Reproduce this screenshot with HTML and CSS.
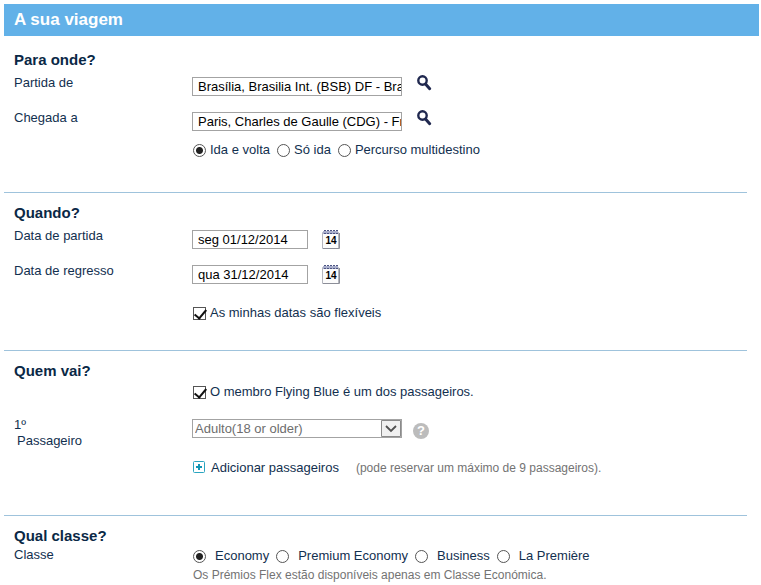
FILE: index.html
```html
<!DOCTYPE html>
<html lang="pt">
<head>
<meta charset="utf-8">
<title>A sua viagem</title>
<link rel="stylesheet" href="styles.css">
</head>
<body>
<form class="trip">
  <h1>A sua viagem</h1>

  <section class="first">
    <h2>Para onde?</h2>
    <div class="row">
      <label class="name" for="from">Partida de</label>
      <div class="field">
        <input class="box place" id="from" type="text" value="Brasília, Brasilia Int. (BSB) DF - Brasil">
        <button class="icon search" type="button" aria-label="Procurar partida"><svg width="15" height="16" viewBox="0 0 15 16"><circle cx="5.500" cy="5.500" r="4.200" fill="none" stroke="#20284f" stroke-width="2.400"/><path d="M8.500 9l4.200 4.700" stroke="#20284f" stroke-width="3" stroke-linecap="round"/></svg></button>
      </div>
    </div>
    <div class="row">
      <label class="name" for="to">Chegada a</label>
      <div class="field">
        <input class="box place" id="to" type="text" value="Paris, Charles de Gaulle (CDG) - França">
        <button class="icon search" type="button" aria-label="Procurar chegada"><svg width="15" height="16" viewBox="0 0 15 16"><circle cx="5.500" cy="5.500" r="4.200" fill="none" stroke="#20284f" stroke-width="2.400"/><path d="M8.500 9l4.200 4.700" stroke="#20284f" stroke-width="3" stroke-linecap="round"/></svg></button>
      </div>
    </div>
    <div class="row choices">
      <div class="options">
        <label><input type="radio" name="type" checked>Ida e volta</label>
        <label><input type="radio" name="type">Só ida</label>
        <label><input type="radio" name="type">Percurso multidestino</label>
      </div>
    </div>
  </section>

  <section>
    <h2>Quando?</h2>
    <div class="row">
      <label class="name" for="out">Data de partida</label>
      <div class="field">
        <input class="box date" id="out" type="text" value="seg 01/12/2014">
        <button class="icon" type="button" aria-label="Escolher data de partida"><svg width="18" height="19" viewBox="0 0 18 19"><path d="M.5 2.500h16v16h-16z" fill="#fcfcfc" stroke="#b4b6be"/><path d="M1 18.500h16.500V3" stroke="#8c8e98" fill="none"/><path d="M1 1h15v3h-15z" fill="#a9aecb"/><path d="M2 .5h14M2 3.500h14" stroke="#4d5584" stroke-dasharray="2 1"/><text x="9" y="14" text-anchor="middle" class="day">14</text></svg></button>
      </div>
    </div>
    <div class="row">
      <label class="name" for="back">Data de regresso</label>
      <div class="field">
        <input class="box date" id="back" type="text" value="qua 31/12/2014">
        <button class="icon" type="button" aria-label="Escolher data de regresso"><svg width="18" height="19" viewBox="0 0 18 19"><path d="M.5 2.500h16v16h-16z" fill="#fcfcfc" stroke="#b4b6be"/><path d="M1 18.500h16.500V3" stroke="#8c8e98" fill="none"/><path d="M1 1h15v3h-15z" fill="#a9aecb"/><path d="M2 .5h14M2 3.500h14" stroke="#4d5584" stroke-dasharray="2 1"/><text x="9" y="14" text-anchor="middle" class="day">14</text></svg></button>
      </div>
    </div>
    <div class="row flexible">
      <div class="options"><label><input type="checkbox" checked>As minhas datas são flexíveis</label></div>
    </div>
  </section>

  <section>
    <h2>Quem vai?</h2>
    <div class="row member">
      <div class="options"><label><input type="checkbox" checked>O membro Flying Blue é um dos passageiros.</label></div>
    </div>
    <div class="row passenger">
      <label class="name" for="pax">1º<br><span class="indent">Passageiro</span></label>
      <div class="field">
        <span class="select">
          <select class="box" id="pax" disabled><option>Adulto(18 or older)</option></select>
          <svg class="arrow" width="20" height="17" viewBox="0 0 20 17"><path d="M.5.5h19v16h-19z" fill="#f0f0f0" stroke="#8a8a8a"/><path d="M5 6l5 5L15 6" fill="none" stroke="#505050" stroke-width="1.800"/></svg>
        </span>
        <button class="icon help" type="button" aria-label="Ajuda">?</button>
      </div>
    </div>
    <div class="row add">
      <div class="field">
        <a class="addlink" href="#"><svg width="12" height="12" viewBox="0 0 12 12"><rect x=".5" y=".5" width="11" height="11" rx="1" fill="#fff" stroke="#2aa5c0"/><path d="M6 3v6M3 6h6" stroke="#1295b5" stroke-width="2"/></svg>Adicionar passageiros</a>
        <span class="note">(pode reservar um máximo de 9 passageiros).</span>
      </div>
    </div>
  </section>

  <section class="last">
    <h2>Qual classe?</h2>
    <div class="row class">
      <span class="name" id="cabin">Classe</span>
      <div>
        <div class="options wide" role="radiogroup" aria-labelledby="cabin">
          <label><input type="radio" name="cabin" checked>Economy</label>
          <label><input type="radio" name="cabin">Premium Economy</label>
          <label><input type="radio" name="cabin">Business</label>
          <label><input type="radio" name="cabin">La Première</label>
        </div>
        <p class="note">Os Prémios Flex estão disponíveis apenas em Classe Económica.</p>
      </div>
    </div>
  </section>
</form>
</body>
</html>
```
FILE: styles.css
```css
* { box-sizing: border-box; }
body {
  margin: 4px 2px 0 4px;
  background: #fff;
  color: #12304f;
  font: 13px/16px "Liberation Sans", Arial, sans-serif;
}
.day { font: bold 10px "Liberation Sans", Arial, sans-serif; fill: #000; }
h1 {
  margin: 0;
  padding: 0 10px;
  background: #62b1e8;
  color: #fff;
  font-size: 17px;
  line-height: 32px;
}
h2 { margin: 0; font-size: 15px; line-height: 20px; color: #0a2846; }
section {
  margin-right: 12px;
  padding: 10px 0 29px 10px;
  border-bottom: 1px solid #9fc3dc;
}
.first { padding-top: 14px; padding-bottom: 34px; }
.last { padding-bottom: 0; border-bottom: 0; }
.row {
  display: grid;
  grid-template-columns: 178px 1fr;
  align-items: start;
  min-height: 35px;
}
.row > :last-child { grid-column: 2; }
.name { padding-top: 5px; }
.indent { padding-left: 3px; }
.field { display: flex; align-items: center; padding-top: 7px; }
.box {
  height: 19px;
  margin: 0;
  padding: 0 0 0 5px;
  border: 1px solid #a3a3a3;
  border-radius: 0;
  background: #fff;
  color: #000;
  font: inherit;
}
.place { width: 210px; }
.date { width: 116px; }
.icon {
  display: flex;
  margin: 0 0 0 14px;
  padding: 0;
  border: 0;
  background: none;
}
.search { align-self: flex-start; height: 16px; margin-top: -2px; margin-left: 15px; }

.options { display: flex; gap: 6px; }
.options label { display: flex; align-items: center; gap: 4px; }
.options input {
  appearance: none;
  flex: none;
  width: 13px;
  height: 13px;
  margin: 0 0 0 1px;
  border: 1px solid #555;
  background: #fff;
}
.options input[type="radio"] { border-radius: 50%; }
.options input[type="radio"]:checked { background: radial-gradient(circle, #222 3px, #fff 4px); }
.options input[type="checkbox"]:checked::before {
  content: "";
  display: block;
  width: 5px;
  height: 10px;
  margin: -1px 0 0 3px;
  border: solid #111;
  border-width: 0 2px 2px 0;
  transform: rotate(40deg);
}
.choices { min-height: 18px; padding-top: 2px; }
.flexible { min-height: 28px; padding-top: 12px; }
.member { min-height: 31px; padding-top: 3px; }
.passenger { min-height: 48px; }
.passenger .field { align-items: flex-start; }
.select { position: relative; display: flex; width: 210px; }
.select .box {
  appearance: none;
  width: 100%;
  padding-left: 2px;
  color: #6d6d6d;
  opacity: 1;
}
.arrow { position: absolute; top: 1px; right: 1px; }
.help {
  justify-content: center;
  width: 16px;
  height: 16px;
  margin: 4px 0 0 11px;
  border-radius: 50%;
  background: #bcbcbc;
  color: #fff;
  font: bold 13px/16px "Liberation Sans", Arial, sans-serif;
}
.add { min-height: 26px; padding-top: 0; }
.add .field { padding-top: 0; }
.addlink { display: flex; gap: 6px; margin: 0 17px 0 1px; color: inherit; text-decoration: none; }
.addlink svg { margin-top: 1px; }
.note { margin: 0; color: #737373; font-size: 12px; }
.class .name { padding-top: 1px; }
.class .options { padding-top: 2px; }
.wide label { gap: 9px; }
.class .note { padding: 3px 0 0 1px; }
```
